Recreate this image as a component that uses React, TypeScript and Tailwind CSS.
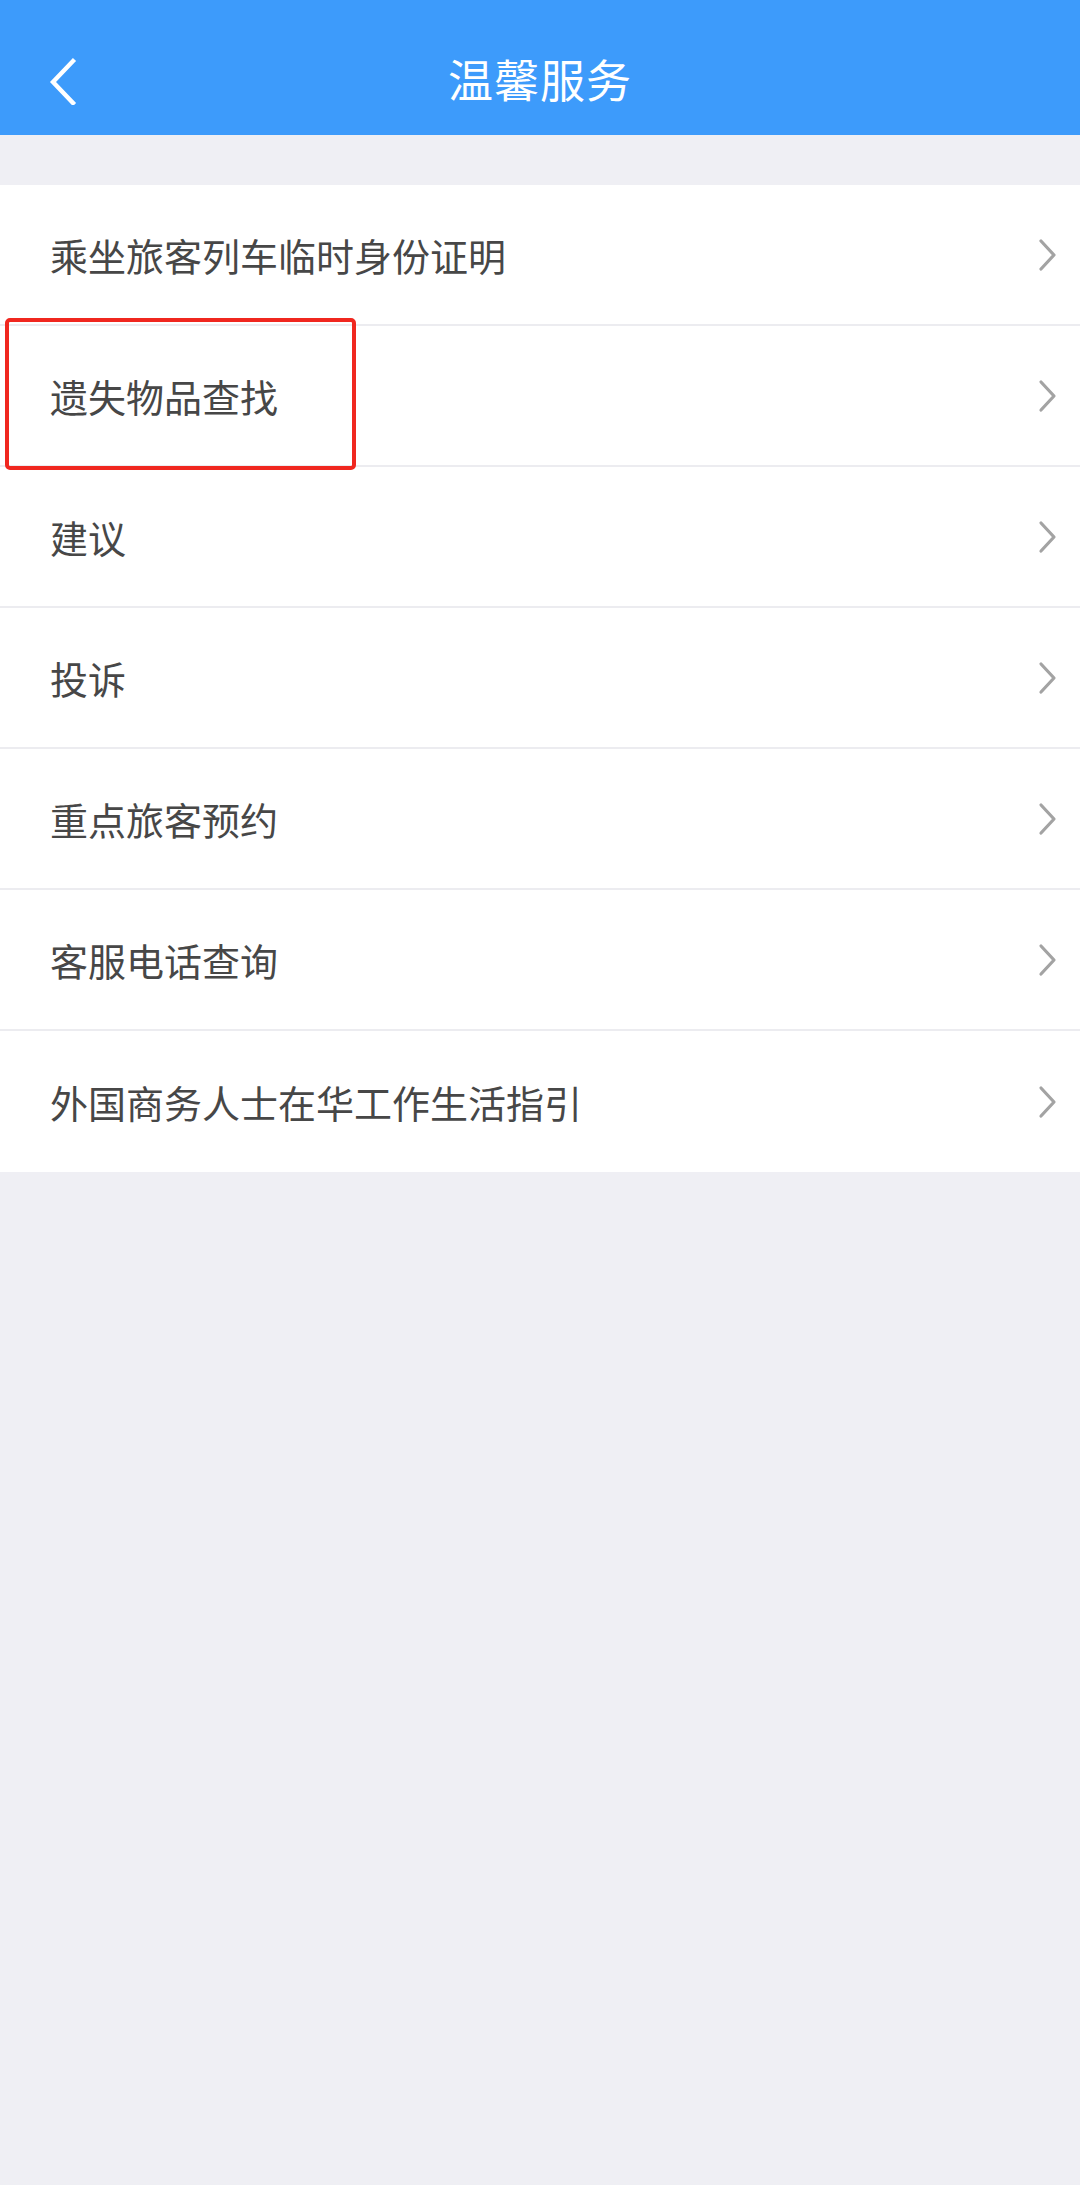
import React from "react";

const items = [
  "乘坐旅客列车临时身份证明",
  "遗失物品查找",
  "建议",
  "投诉",
  "重点旅客预约",
  "客服电话查询",
  "外国商务人士在华工作生活指引",
];

function Chevron() {
  return (
    <svg width="24" height="36" viewBox="0 0 24 36" className="shrink-0">
      <path d="M5 4 L18 18 L5 32" fill="none" stroke="#a3a3a3" strokeWidth="3.2" strokeLinecap="round" strokeLinejoin="round" />
    </svg>
  );
}

export default function App() {
  return (
    <div
      className="relative w-[1080px] min-h-[2185px] bg-[#efeff4]"
      style={{ fontFamily: '"Noto Sans CJK SC", "Noto Sans", sans-serif' }}
    >
      <header className="relative flex h-[135px] items-center justify-center bg-[#3d9bfb] pt-[22px]">
        <button className="absolute left-[40px] top-[55px] flex h-[52px] w-[44px] items-center justify-center">
          <svg width="34" height="48" viewBox="0 0 34 48">
            <path d="M28 4 L8 25 L28 46" fill="none" stroke="#ffffff" strokeWidth="4.4" strokeLinecap="square" strokeLinejoin="miter" />
          </svg>
        </button>
        <h1 className="text-[45px] leading-none text-white tracking-[1px]">温馨服务</h1>
      </header>
      <div className="h-[50px]" />
      <ul className="bg-white">
        {items.map((t, i) => (
          <li
            key={t}
            className={`flex h-[141px] items-center justify-between pl-[50px] pr-[20px] ${
              i < items.length - 1 ? "border-b-2 border-[#ececf0]" : ""
            }`}
          >
            <span className="text-[38px] leading-none text-[#474747]">{t}</span>
            <Chevron />
          </li>
        ))}
      </ul>
      <div className="pointer-events-none absolute left-[5px] top-[318px] h-[152px] w-[351px] rounded-[5px] border-[4px] border-[#f0271f]" />
    </div>
  );
}
